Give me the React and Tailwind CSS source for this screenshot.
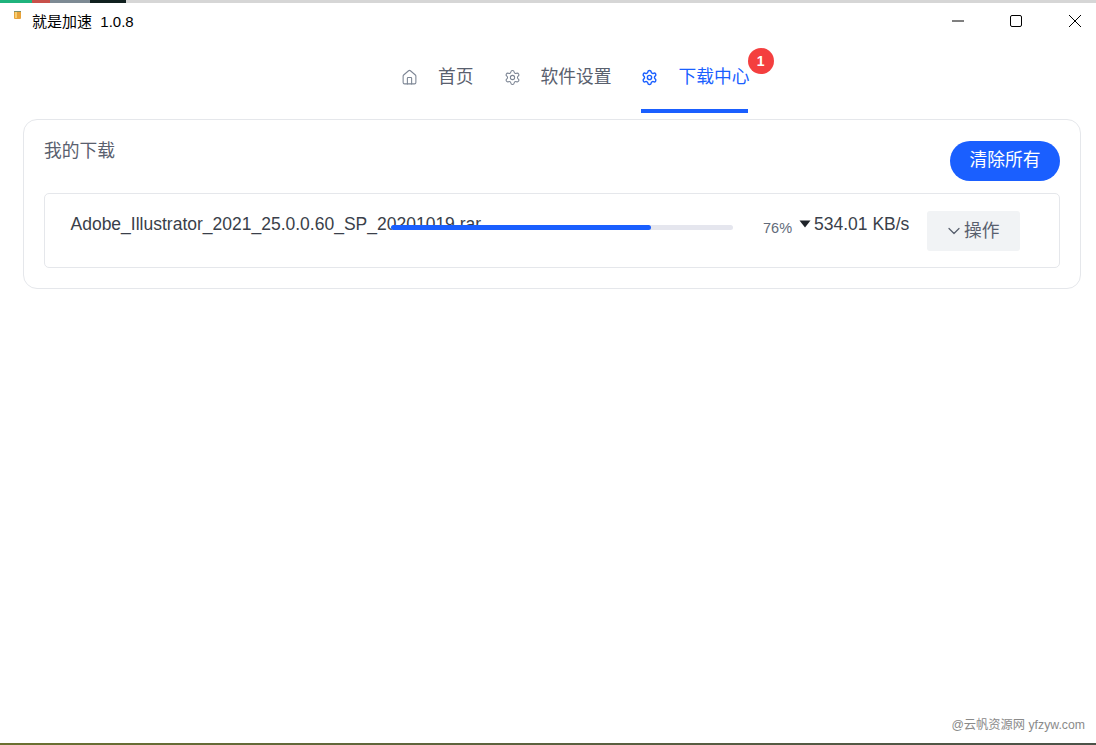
import React from "react";
import { House, Settings, ChevronDown } from "lucide-react";

const font = "font-['Liberation_Sans','Noto_Sans_CJK_SC',sans-serif]";

function NavItem({ icon, label, active, badge, extra }) {
  return (
    <div className={`relative box-border flex h-[75px] shrink-0 items-center whitespace-nowrap ${extra} ${active ? "border-b-4 border-[#1a5fff] pt-[7px] text-[#1a5fff]" : "pt-[3px] text-[#59606e]"}`}>
      {icon}
      <span className="shrink-0 text-[17.75px] leading-[24px]">{label}</span>
      {badge && (
        <span className="absolute left-[107px] top-[10px] flex h-[26px] w-[26px] items-center justify-center rounded-full bg-[#f43f3f] text-[14px] font-bold text-white">
          {badge}
        </span>
      )}
    </div>
  );
}

export default function App() {
  return (
    <div className={`flex h-[745px] w-[1096px] flex-col overflow-hidden bg-white ${font}`}>
      <div className="flex h-[3px] shrink-0 bg-[#d6d6d6]">
        <div className="w-[32px] bg-[#1fb37c]" />
        <div className="w-[18px] bg-[#c8504a]" />
        <div className="w-[40px] bg-[#7d8a94]" />
        <div className="w-[36px] bg-[#10201f]" />
      </div>
      <div className="relative flex min-h-0 flex-1 flex-col rounded-tl-[8px] bg-white">
        <header className="flex h-[35px] shrink-0 items-center justify-between">
          <div className="flex items-center">
            <svg width="7" height="8" viewBox="0 0 7 8" className="relative top-[-6px] ml-[14px]">
              <rect x="0" y="0" width="7" height="8" rx="1" fill="#e8a33a" />
              <rect x="1" y="1" width="2" height="6" fill="#f6cf74" />
              <rect x="0" y="0" width="7" height="1" fill="#7f8f6a" />
            </svg>
            <span className="relative top-[1px] ml-[11px] whitespace-pre text-[15px] leading-[20px] text-black">就是加速  1.0.8</span>
          </div>
          <div className="flex items-center text-black">
            <svg width="14" height="14" viewBox="0 0 14 14" className="mr-[44px]"><path d="M1 7h12" stroke="currentColor" strokeWidth="1" /></svg>
            <svg width="14" height="14" viewBox="0 0 14 14" className="mr-[45px]"><rect x="1.5" y="1.5" width="11" height="11" rx="1.5" fill="none" stroke="currentColor" strokeWidth="1" /></svg>
            <svg width="14" height="14" viewBox="0 0 14 14" className="mr-[14px]"><path d="M1 1l12 12M13 1L1 13" stroke="currentColor" strokeWidth="1" /></svg>
          </div>
        </header>
        <nav className="flex h-[75px] shrink-0 items-start pl-[401px]">
          <NavItem extra="gap-[20px] mr-[30px]" label="首页" icon={<House size={17} strokeWidth={1.5} className="shrink-0 text-[#7c8594]" />} />
          <NavItem extra="gap-[20px] mr-[29px]" label="软件设置" icon={<Settings size={17} strokeWidth={1.5} className="shrink-0 text-[#7c8594]" />} />
          <NavItem active badge="1" extra="gap-[21px] w-[107px]" label="下载中心" icon={<Settings size={17} strokeWidth={2} className="shrink-0" />} />
        </nav>
        <main className="mx-[23px] mt-[6px] h-[170px] w-[1058px] shrink-0 rounded-[14px] border border-[#e5e7eb] px-[20px] pt-[21px]">
          <div className="flex h-[52px] items-start justify-between">
            <h2 className="mt-[-1px] text-[17.75px] font-normal leading-[22px] text-[#59606e]">我的下载</h2>
            <button className="h-[40px] w-[110px] rounded-full bg-[#1a5fff] pb-[2px] text-[17.75px] text-white">清除所有</button>
          </div>
          <div className="relative flex h-[75px] items-start rounded-[5px] border border-[#e5e7eb] pl-[25.5px]">
            <span className="mt-[20px] w-[320.5px] whitespace-nowrap text-[17.5px] leading-[20px] text-[#3a3f4a]">Adobe_Illustrator_2021_25.0.0.60_SP_20201019.rar</span>
            <div className="relative mt-[31px] h-[5px] w-[342px] shrink-0 rounded-full bg-[#e5e6ee]">
              <div className="h-full w-[76%] rounded-full bg-[#1a5fff]" />
            </div>
            <span className="ml-[30px] mt-[25px] w-[36px] text-[14.5px] leading-[18px] text-[#626b7a]">76%</span>
            <svg width="12" height="8" viewBox="0 0 12 8" className="mt-[26px] shrink-0"><path d="M0.5 0.5h11L6 7.5z" fill="#1f2329" /></svg>
            <span className="ml-[3px] mt-[20px] w-[113px] whitespace-nowrap text-[17.5px] leading-[20px] text-[#3a3f4a]">534.01 KB/s</span>
            <button className="mt-[17px] flex h-[40px] w-[93px] items-center justify-start rounded-[3px] bg-[#f1f3f5] pl-[17px] text-[17.75px] text-[#59606e]">
              <ChevronDown size={20} strokeWidth={1.5} className="shrink-0" />
              <span>操作</span>
            </button>
          </div>
        </main>
        <div className="mt-auto flex justify-end pb-[9px] pr-[11px] text-[12.25px] leading-[18px] text-[#8a8a8a]">@云帆资源网 yfzyw.com</div>
      </div>
      <div className="h-[2px] shrink-0 bg-gradient-to-r from-[#6b7030] to-[#4c5248]" />
    </div>
  );
}
